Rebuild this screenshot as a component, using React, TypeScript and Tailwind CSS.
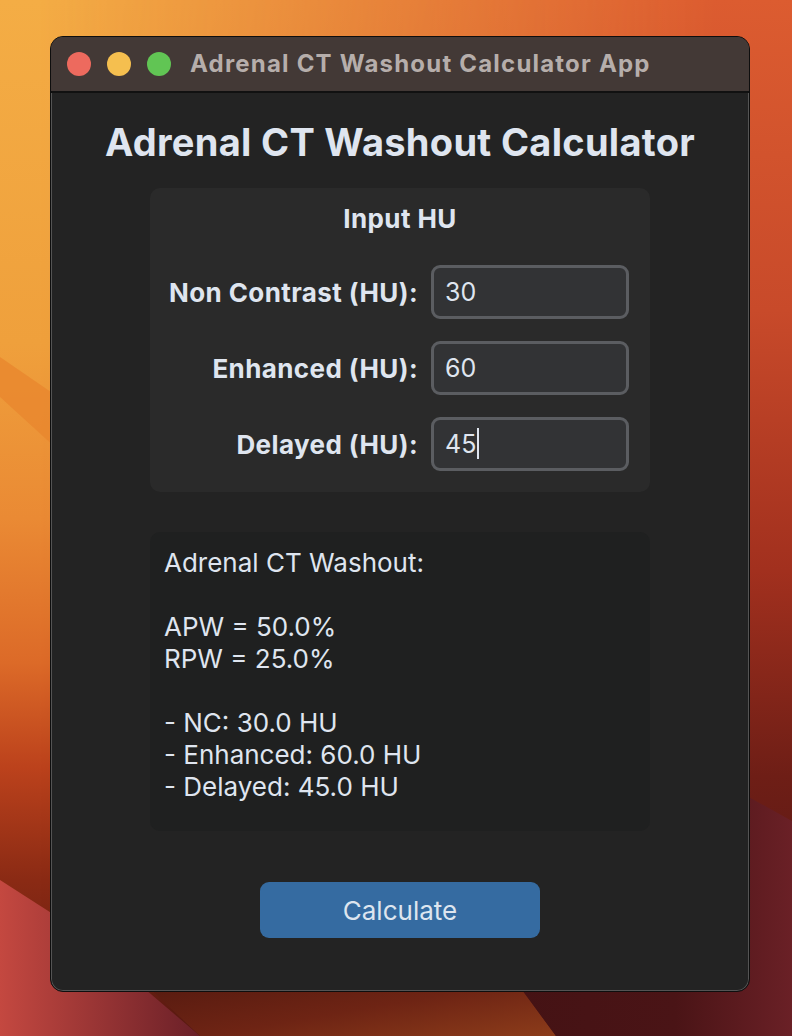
import { useState } from 'react';

function Wallpaper() {
  return (
    <svg className="absolute inset-0" width="792" height="1036" viewBox="0 0 792 1036">
      <defs>
        <linearGradient id="leftV" x1="0" y1="0" x2="0" y2="1">
          <stop offset="0" stopColor="#f4ad45" />
          <stop offset="0.33" stopColor="#efa03c" />
          <stop offset="0.5" stopColor="#ea8a34" />
          <stop offset="0.64" stopColor="#dc6a28" />
          <stop offset="0.74" stopColor="#bc421c" />
          <stop offset="0.85" stopColor="#8a2a14" />
          <stop offset="1" stopColor="#5a1a10" />
        </linearGradient>
        <linearGradient id="rightV" x1="0" y1="0" x2="0" y2="1">
          <stop offset="0" stopColor="#dc5c30" />
          <stop offset="0.3" stopColor="#c84a2a" />
          <stop offset="0.55" stopColor="#a2301e" />
          <stop offset="0.75" stopColor="#6e1e16" />
          <stop offset="1" stopColor="#4a1414" />
        </linearGradient>
        <linearGradient id="fadeH" x1="0" y1="0" x2="1" y2="0">
          <stop offset="0.05" stopColor="#000" />
          <stop offset="0.9" stopColor="#fff" />
        </linearGradient>
        <mask id="rightMask">
          <rect width="792" height="1036" fill="url(#fadeH)" />
        </mask>
        <linearGradient id="pinkLow" x1="0" y1="0" x2="1" y2="0">
          <stop offset="0" stopColor="#c44840" />
          <stop offset="1" stopColor="#6a2028" />
        </linearGradient>
        <linearGradient id="midLow" x1="0" y1="0" x2="1" y2="1">
          <stop offset="0" stopColor="#4c160e" />
          <stop offset="0.6" stopColor="#6e2414" />
          <stop offset="1" stopColor="#8c3c1a" />
        </linearGradient>
        <linearGradient id="rightLow" x1="0" y1="0" x2="1" y2="0">
          <stop offset="0" stopColor="#441214" />
          <stop offset="0.6" stopColor="#4a1416" />
          <stop offset="1" stopColor="#6a2026" />
        </linearGradient>
      </defs>
      <rect width="792" height="1036" fill="url(#leftV)" />
      <rect width="792" height="1036" fill="url(#rightV)" mask="url(#rightMask)" />
      <path d="M0 357 L80 412 L80 470 L0 397 Z" fill="#e8862e" opacity="0.75" />
      <path d="M0 880 L70 925 L200 1036 L0 1036 Z" fill="url(#pinkLow)" />
      <path d="M120 960 L500 960 L556 1036 L200 1036 Z" fill="url(#midLow)" />
      <path d="M700 770 L792 821 L792 1036 L556 1036 L500 960 L700 960 Z" fill="url(#rightLow)" />
    </svg>
  );
}

function Field({ label, value, onChange, caret }: { label: string; value: string; onChange: (v: string) => void; caret?: boolean }) {
  return (
    <div className="flex items-center">
      <label className="w-[281px] pr-[13px] text-right text-[26px] tracking-[0.4px] font-bold text-[#dfe5ef]">{label}</label>
      <div className="relative">
        <input
          className="box-border w-[198px] h-[54px] rounded-[9px] border-[3px] border-[#5b5d61] bg-[#323335] pl-[11px] text-[25px] text-[#dfe5ef] outline-none"
          value={value}
          onChange={(e) => onChange(e.target.value)}
        />
        {caret && <span className="absolute left-[46px] top-[11px] h-[31px] w-[2px] bg-[#dfe5ef]" />}
      </div>
    </div>
  );
}

export default function App() {
  const [nc, setNc] = useState('30');
  const [enh, setEnh] = useState('60');
  const [del, setDel] = useState('45');
  const [result, setResult] = useState({ nc: 30, enh: 60, del: 45 });

  const apw = ((result.enh - result.del) / (result.enh - result.nc)) * 100;
  const rpw = ((result.enh - result.del) / result.enh) * 100;

  function calculate() {
    setResult({ nc: parseFloat(nc) || 0, enh: parseFloat(enh) || 0, del: parseFloat(del) || 0 });
  }

  return (
    <div className="relative w-[792px] h-[1036px] overflow-hidden font-['Inter','Liberation_Sans',sans-serif]">
      <Wallpaper />
      <div className="relative ml-[50px] mt-[36px] w-[700px] h-[956px] rounded-[13px] border border-[#0e0e0e] bg-[#232323] shadow-[inset_0_0_0_1px_#545454] overflow-hidden">
        {/* title bar */}
        <div className="flex h-[56px] items-center border-b-2 border-[#111] bg-[#433936] pl-[16px]">
          <span className="h-[24px] w-[24px] rounded-full bg-[#ed6a5e]" />
          <span className="ml-[16px] h-[24px] w-[24px] rounded-full bg-[#f5bf4f]" />
          <span className="ml-[16px] h-[24px] w-[24px] rounded-full bg-[#61c554]" />
          <span className="ml-[19px] text-[24px] tracking-[1.2px] font-bold text-[#b6aeab]">Adrenal CT Washout Calculator App</span>
        </div>

        <div className="flex flex-col items-center">
          <h1 className="mt-[27px] text-[38px] leading-[44px] tracking-[0.3px] font-bold text-[#dfe5ef]">Adrenal CT Washout Calculator</h1>

          <div className="mt-[24px] w-[500px] h-[304px] rounded-[10px] bg-[#2a2a2a] pt-[14px]">
            <div className="text-center text-[26px] leading-[34px] tracking-[0.4px] font-bold text-[#dfe5ef]">Input HU</div>
            <div className="mt-[29px] flex flex-col gap-[22px]">
              <Field label="Non Contrast (HU):" value={nc} onChange={setNc} />
              <Field label="Enhanced (HU):" value={enh} onChange={setEnh} />
              <Field label="Delayed (HU):" value={del} onChange={setDel} caret />
            </div>
          </div>

          <div className="mt-[40px] w-[500px] h-[299px] rounded-[10px] bg-[#1f2020] px-[14px] pt-[15px] text-[26px] leading-[32px] text-[#dfe5ef] whitespace-pre">
            {`Adrenal CT Washout:\n\nAPW = ${apw.toFixed(1)}%\nRPW = ${rpw.toFixed(1)}%\n\n- NC: ${result.nc.toFixed(1)} HU\n- Enhanced: ${result.enh.toFixed(1)} HU\n- Delayed: ${result.del.toFixed(1)} HU`}
          </div>

          <button
            onClick={calculate}
            className="mt-[51px] w-[280px] h-[56px] rounded-[9px] bg-[#356ba1] text-[26px] text-[#dde5ef]"
          >
            Calculate
          </button>
        </div>
      </div>
    </div>
  );
}
